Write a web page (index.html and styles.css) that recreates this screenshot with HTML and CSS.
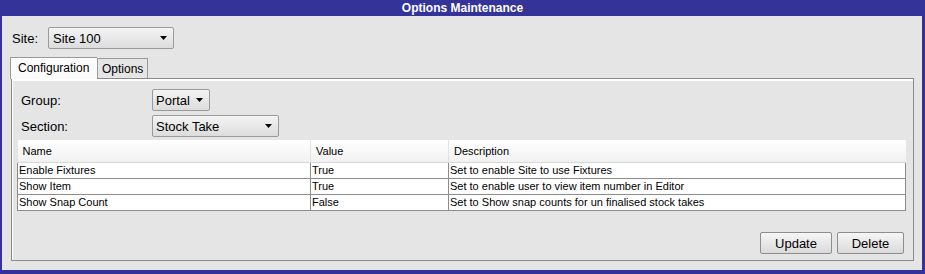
FILE: index.html
```html
<!DOCTYPE html>
<html lang="en">
<head>
  <meta charset="UTF-8">
  <title>Options Maintenance</title>
  <link rel="stylesheet" href="styles.css">
</head>
<body>
  <div class="window">
    <div class="titlebar">Options Maintenance</div>
    <div class="window-body">
      <div class="site-row">
        <label class="site-label">Site:</label>
        <div class="combo combo-site">
          <span>Site 100</span>
          <svg class="arrow" width="7" height="4" viewBox="0 0 7 4"><path d="M0 0h7L3.5 4z" fill="#000"/></svg>
        </div>
      </div>

      <div class="tabs">
        <div class="tab active">Configuration</div>
        <div class="tab">Options</div>
      </div>

      <div class="panel">
        <div class="field-row">
          <label class="field-label">Group:</label>
          <div class="combo combo-group">
            <span>Portal</span>
            <svg class="arrow" width="7" height="4" viewBox="0 0 7 4"><path d="M0 0h7L3.5 4z" fill="#000"/></svg>
          </div>
        </div>
        <div class="field-row">
          <label class="field-label">Section:</label>
          <div class="combo combo-section">
            <span>Stock Take</span>
            <svg class="arrow" width="7" height="4" viewBox="0 0 7 4"><path d="M0 0h7L3.5 4z" fill="#000"/></svg>
          </div>
        </div>

        <table class="grid">
          <thead>
            <tr>
              <th class="col-name">Name</th>
              <th class="col-value">Value</th>
              <th>Description</th>
            </tr>
          </thead>
          <tbody>
            <tr>
              <td>Enable Fixtures</td>
              <td>True</td>
              <td>Set to enable Site to use Fixtures</td>
            </tr>
            <tr>
              <td>Show Item</td>
              <td>True</td>
              <td>Set to enable user to view item number in Editor</td>
            </tr>
            <tr>
              <td>Show Snap Count</td>
              <td>False</td>
              <td>Set to Show snap counts for un finalised stock takes</td>
            </tr>
          </tbody>
        </table>

        <div class="actions">
          <button class="btn btn-update">Update</button>
          <button class="btn btn-delete">Delete</button>
        </div>
      </div>
    </div>
  </div>
</body>
</html>
```

FILE: styles.css
```css
* {
  margin: 0;
  padding: 0;
  box-sizing: border-box;
}

body {
  font-family: 'Liberation Sans', Arial, sans-serif;
  font-size: 12px;
  color: #000;
  background-color: #fff;
}

.window {
  width: 925px;
  height: 274px;
  display: flex;
  flex-direction: column;
}

.titlebar {
  height: 16px;
  line-height: 16px;
  background-color: #333399;
  color: #fff;
  font-weight: bold;
  font-size: 12px;
  text-align: center;
}

.window-body {
  flex: 1;
  background-color: #e5e5e5;
  border-left: 2px solid #333399;
  border-right: 3px solid #333399;
  border-bottom: 4px solid #333399;
  display: flex;
  flex-direction: column;
}

/* Site selector */
.site-row {
  display: flex;
  align-items: center;
  margin-top: 11px;
  padding-left: 10px;
  height: 22px;
}

.site-label {
  font-size: 13px;
  width: 36px;
}

.combo {
  height: 22px;
  border: 1px solid #9a9a9a;
  border-radius: 2px;
  background: linear-gradient(#f4f4f4, #dcdcdc);
  display: flex;
  align-items: center;
  justify-content: space-between;
  padding: 0 6px 0 4px;
  font-size: 13px;
}

.combo-site {
  width: 126px;
}

.combo-group {
  width: 58px;
  padding-left: 3px;
}

.combo-section {
  width: 127px;
  padding-left: 3px;
}

.arrow {
  display: block;
}

/* Tabs */
.tabs {
  display: flex;
  align-items: flex-end;
  margin-top: 7px;
  padding-left: 8px;
  height: 22px;
}

.tab {
  border: 1px solid #9a9a9a;
  border-bottom: none;
  background-color: #e5e5e5;
  font-size: 12px;
  padding: 0 4px;
  height: 20px;
  line-height: 20px;
}

.tab.active {
  background-color: #fbfbfb;
  height: 22px;
  line-height: 21px;
  width: 87px;
  padding-left: 7px;
  border-right: none;
  position: relative;
  z-index: 1;
  margin-bottom: -1px;
}

/* Panel */
.panel {
  margin: 0 8px 0 9px;
  height: 183px;
  border: 1px solid #8a8a8a;
  box-shadow: inset 1px 2px 0 #fff;
  padding: 10px 8px 6px 5px;
  display: flex;
  flex-direction: column;
}

.field-row {
  display: flex;
  align-items: center;
  height: 22px;
  margin-bottom: 4px;
}

.field-label {
  width: 135px;
  padding-left: 4px;
  font-size: 13px;
}

/* Table */
.grid {
  border-collapse: collapse;
  width: 889px;
  font-size: 11px;
  margin-top: -1px;
}

.grid th {
  height: 22px;
  font-weight: normal;
  text-align: left;
  padding: 1px 0 0 5px;
  background: linear-gradient(#ffffff, #f1f1f1);
  border-left: 1px solid #e2e2e2;
  border-bottom: 1px solid #d8d8d8;
}

.grid th:first-child {
  border-left: none;
}

.col-name {
  width: 293px;
}

.col-value {
  width: 138px;
}

.grid td {
  height: 16px;
  padding: 0 0 0 1px;
  background-color: #fff;
  border: 1px solid #8c8c8c;
  white-space: nowrap;
}

/* Buttons */
.actions {
  margin-top: auto;
  display: flex;
  justify-content: flex-end;
  gap: 5px;
  padding-right: 1px;
}

.btn {
  height: 22px;
  border: 1px solid #8e8e8e;
  border-radius: 2px;
  background: linear-gradient(#f6f6f6, #dadada);
  font-family: 'Liberation Sans', Arial, sans-serif;
  font-size: 13px;
  color: #000;
}

.btn-update {
  width: 72px;
}

.btn-delete {
  width: 67px;
}
```
